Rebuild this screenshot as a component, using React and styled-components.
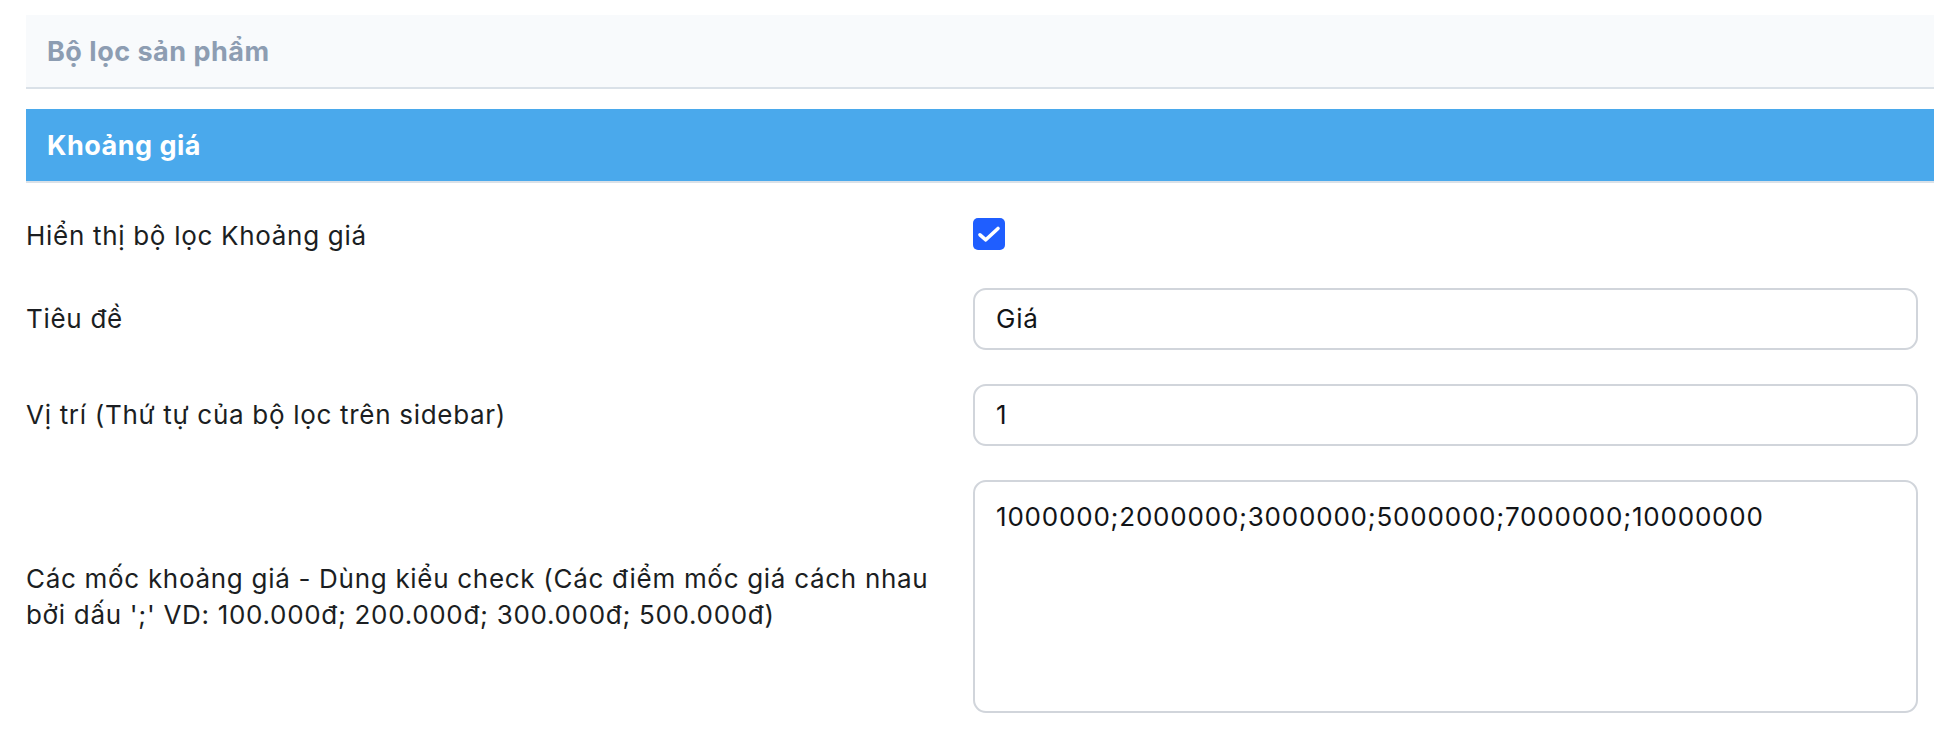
import React from "react";
import styled, { createGlobalStyle } from "styled-components";

const GlobalStyle = createGlobalStyle`
  html, body {
    margin: 0;
    padding: 0;
    background: #ffffff;
    overflow: hidden;
  }
  body {
    font-family: Inter, "Noto Sans", "Liberation Sans", sans-serif;
    color: #1b1e22;
  }
  * { box-sizing: border-box; }
`;

const Page = styled.div`
  padding: 15px 0 0 26px;
`;

const PanelHeader = styled.div`
  height: 74px;
  display: flex;
  align-items: center;
  padding: 0 20px 0 21px;
  background: ${(p) => (p.$accent ? "#4aa9ec" : "#f8fafc")};
  border-bottom: 2px solid #dae1e8;
  color: ${(p) => (p.$accent ? "#ffffff" : "#8d9db2")};
  font-size: 27px;
  letter-spacing: 0.5px;
  font-weight: 700;
  margin-bottom: ${(p) => p.$gap || 0}px;
`;

const Form = styled.div`
  padding: 35px 16px 0 0;
  display: flex;
  flex-direction: column;
  gap: 34px;
`;

const Row = styled.div`
  display: grid;
  grid-template-columns: 947px 1fr;
  align-items: center;
`;

const Label = styled.label`
  font-size: 26px;
  letter-spacing: 0.7px;
  line-height: 36px;
  color: #1b1e22;
`;

const CheckBox = styled.span`
  width: 32px;
  height: 32px;
  border-radius: 5px;
  background: #1f5eff;
  display: inline-flex;
  align-items: center;
  justify-content: center;
`;

const TextInput = styled.div`
  height: 62px;
  border: 2px solid #d1d5db;
  border-radius: 13px;
  padding: 11px 20px 11px 21px;
  font-size: 26px;
  letter-spacing: 0.8px;
  line-height: 36px;
  color: #121417;
  background: #fff;
`;

const TextArea = styled(TextInput)`
  height: 233px;
  padding-top: 17px;
`;

export default function App() {
  return (
    <>
      <GlobalStyle />
      <Page>
        <PanelHeader $gap={20}>Bộ lọc sản phẩm</PanelHeader>
        <PanelHeader $accent>Khoảng giá</PanelHeader>
        <Form>
          <Row>
            <Label>Hiển thị bộ lọc Khoảng giá</Label>
            <div>
              <CheckBox>
                <svg width="32" height="32" viewBox="0 0 32 32" fill="none">
                  <path
                    d="M7 16.8 L12.8 21.8 L25 10.5"
                    stroke="#fff"
                    strokeWidth="3.6"
                    strokeLinecap="round"
                    strokeLinejoin="round"
                  />
                </svg>
              </CheckBox>
            </div>
          </Row>
          <Row>
            <Label>Tiêu đề</Label>
            <TextInput>Giá</TextInput>
          </Row>
          <Row>
            <Label>Vị trí (Thứ tự của bộ lọc trên sidebar)</Label>
            <TextInput>1</TextInput>
          </Row>
          <Row>
            <Label>
              Các mốc khoảng giá - Dùng kiểu check (Các điểm mốc giá cách nhau
              bởi dấu ';' VD: 100.000đ; 200.000đ; 300.000đ; 500.000đ)
            </Label>
            <TextArea>1000000;2000000;3000000;5000000;7000000;10000000</TextArea>
          </Row>
        </Form>
      </Page>
    </>
  );
}
